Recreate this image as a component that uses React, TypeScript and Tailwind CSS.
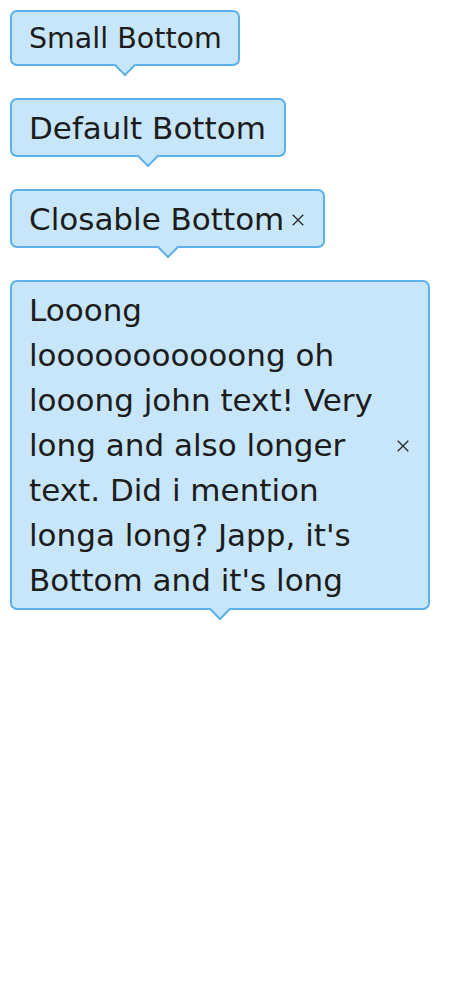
import React from "react";

function Arrow() {
  return (
    <span className="absolute left-1/2 -bottom-[9px] -ml-[8px] h-[16px] w-[16px] rotate-45 border-b-2 border-r-2 border-[#5cb0e8] bg-[#c8e6f9]" />
  );
}

function Close() {
  return (
    <svg width="12" height="12" viewBox="0 0 12 12" className="shrink-0 text-[#2a2a2a]">
      <path d="M0.7 0.7L11.3 11.3M11.3 0.7L0.7 11.3" stroke="currentColor" strokeWidth="1.3" />
    </svg>
  );
}

export default function App() {
  const font = { fontFamily: '"DejaVu Sans", sans-serif' };
  return (
    <div className="flex flex-col items-start gap-[32px] bg-white p-[10px] text-[#1c1c1c]" style={font}>
      <div className="relative rounded-[7px] border-2 border-[#5cb0e8] bg-[#c8e6f9] pb-[4px] pt-[6px] pl-[17px] pr-[16px] text-[28.5px] leading-[42px]">
        Small Bottom
        <Arrow />
      </div>
      <div className="relative rounded-[7px] border-2 border-[#5cb0e8] bg-[#c8e6f9] pb-[4px] pt-[6px] pl-[17px] pr-[18px] text-[31px] leading-[45px]">
        Default Bottom
        <Arrow />
      </div>
      <div className="relative flex items-center gap-[8px] rounded-[7px] border-2 border-[#5cb0e8] bg-[#c8e6f9] pb-[4px] pt-[6px] pl-[17px] pr-[19px] text-[31px] leading-[45px]">
        <span>Closable Bottom</span>
        <Close />
        <Arrow />
      </div>
      <div className="relative flex w-[420px] items-center rounded-[7px] border-2 border-[#5cb0e8] bg-[#c8e6f9] pb-[5px] pt-[6px] pl-[17px] pr-[19px] text-[31px] leading-[45px]">
        <span className="w-[360px]">
          Looong looooooooooong oh looong john text! Very long and also longer text. Did i mention longa long? Japp, it's Bottom and it's long
        </span>
        <span className="ml-auto flex">
          <Close />
        </span>
        <Arrow />
      </div>
    </div>
  );
}
